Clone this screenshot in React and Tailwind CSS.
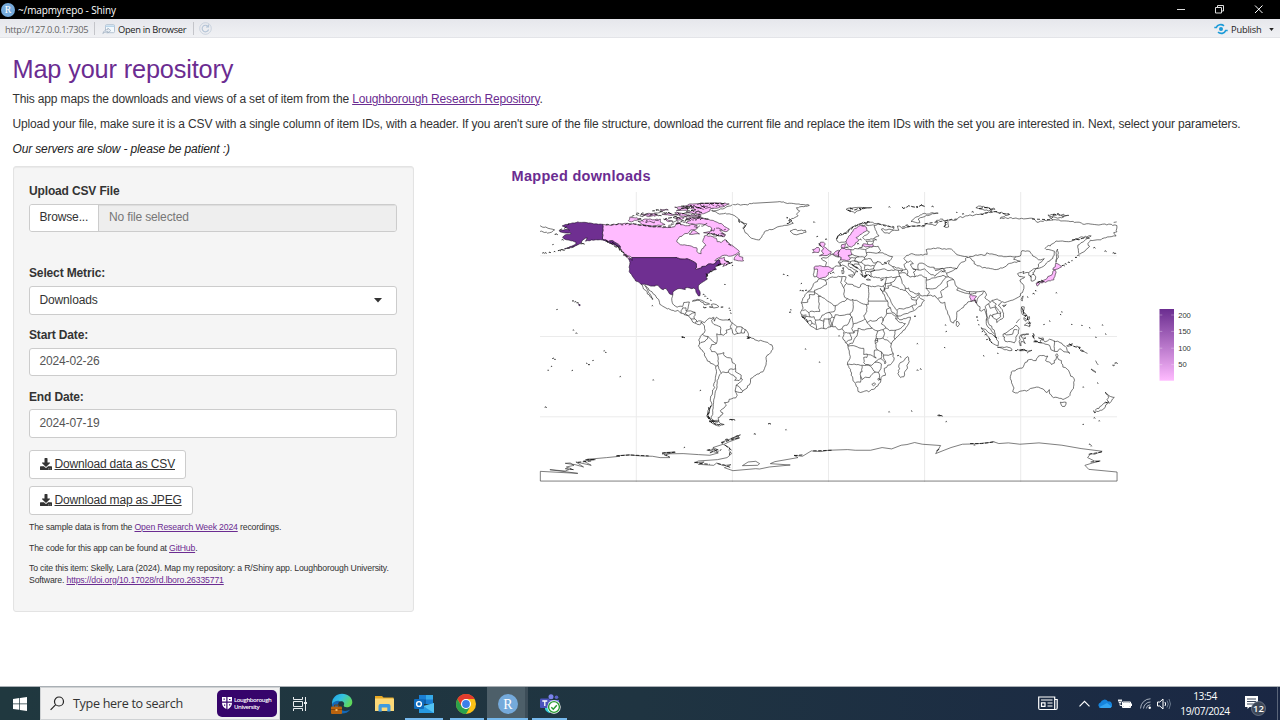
import React from "react";
import { FaDownload } from "react-icons/fa";

/* ---------- map data: "lon,lat lon,lat ..." ---------- */
const USA = [
  "-124.7,48.2 -123,48.3 -122.6,47.2 -122.8,49 -95.2,49 -95.1,49.4 -94.6,48.7 -93.6,48.6 -91.4,48.1 -89.6,48 -88.4,48.3 -84.8,46.8 -83.6,46.1 -82.5,45.3 -82.4,43 -83.1,42 -82.4,41.7 -79,42.8 -79,43.5 -76.8,43.6 -75,45 -71.5,45 -70.3,45.9 -70,46.7 -69.2,47.4 -68,47.3 -67.8,45.7 -67,44.8 -70.1,43.7 -70.8,42.8 -70,41.7 -71.9,41.3 -74,40.7 -74,39.7 -75.5,39 -75.9,37.2 -76.3,39 -76.4,37 -75.7,35.5 -77.4,34.5 -79,33.5 -81.3,31.5 -81.3,30 -80.1,26.9 -80.3,25.3 -81.2,25.2 -82.7,27.6 -82.9,29.1 -84,30.1 -85.3,29.7 -88,30.4 -89.6,30.2 -89.4,29.1 -91.7,29.6 -93.8,29.7 -95.5,28.8 -97.1,27.7 -97.2,25.9 -99.3,26.6 -101.4,29.8 -102.5,29.7 -103.1,29 -104.5,29.6 -106.5,31.8 -108.2,31.8 -108.2,31.3 -111,31.3 -114.8,32.5 -117.1,32.5 -118.4,33.8 -120.4,34.5 -120.7,35.2 -122.5,37.6 -123.9,39.5 -124.4,40.4 -124.1,42 -124.5,43 -123.9,46 -124.7,48.2",
  "-141,69.6 -145,70 -150,70.5 -156.6,71.2 -161,70.2 -163,69.6 -166.2,68.7 -164,67.7 -161.7,66.1 -164,66.6 -168.1,65.7 -166.4,64.7 -161,64.4 -160.8,63.7 -164.5,63.1 -166,61.6 -165,60.6 -162,59.9 -158.5,58.8 -157.6,58.6 -157.7,57.5 -160.5,56 -164.8,54.6 -162,55 -158.4,56 -154.2,58.2 -154,59.4 -151.8,61 -150.6,61.3 -151.7,59.2 -148,60 -144,60 -141,59.9 -139.8,59.6 -137,58.4 -135,57.5 -132,56 -130,55.2 -130,56 -133.4,58.4 -135,59.5 -137.5,59 -139,60 -141,60.3 -141,69.6",
  "-155.9,20.2 -154.9,19.5 -155.7,19 -155.9,20.2",
];
const PINK = [
  "-141,69.7 -136,69 -130,70 -127,70.3 -121,69.8 -115,68.8 -109,68 -102,67.8 -96,68.2 -94,71.5 -92,69.6 -88,68.8 -85.5,69.8 -82,69 -82,67 -86,66.2 -87,64.8 -93,62 -94.6,60 -94.7,58.8 -92.5,57 -88,56.5 -82.3,55.1 -82.2,52.8 -79.5,51.4 -79,54.5 -76.6,56.5 -78.5,59 -77.5,62.5 -73.7,62.4 -70,61 -69.5,58.9 -67,58.3 -64.5,60.3 -61.5,57 -58,54.9 -55.7,53 -56,52 -60,50.2 -66.4,50.2 -71,47 -65,49.2 -64.5,47 -61.5,45.7 -66,43.5 -64.5,45.5 -67,45 -67.8,45.7 -68,47.3 -69.2,47.4 -70.3,45.9 -71.5,45 -75,45 -76.8,43.6 -79,43.5 -79,42.8 -82.4,41.7 -83.1,42 -82.4,43 -82.5,45.3 -83.6,46.1 -84.8,46.8 -88.4,48.3 -89.6,48 -91.4,48.1 -93.6,48.6 -95.2,49 -122.8,49 -124.5,50 -127.5,51 -128.5,53 -130,55 -130,56 -133.4,58.4 -135,59.5 -137.5,59 -139,60 -141,60.3 -141,69.7",
  "-123.5,48.4 -125.5,48.8 -128.2,50.7 -126,50.3 -123.5,48.4",
  "-61.9,66.8 -64,65 -68,66 -64.5,63.4 -65,62 -72,63.5 -78,64.5 -73,65.5 -73,67.5 -77,69.5 -84,69.8 -89,70.5 -86,72 -89,73.7 -81,73.8 -76,73 -71,71.5 -67,70.2 -65,68.3 -61.9,66.8",
  "-117,70 -119,71.5 -114,73 -110,72.5 -105,73 -105,71 -102,69.5 -110,68.6 -115,69.3 -117,70",
  "-125,72 -124,74.3 -117,73.2 -120,72.2 -123,71.2 -125,72",
  "-117,76 -108,76.3 -106,75 -113,74.5 -117,76",
  "-102,73.3 -97,71.5 -101,71.8 -102,73.3",
  "-95,74 -90,73.8 -92,72.5 -95,72.3 -95,74",
  "-62,82.3 -70,83.1 -85,82.3 -91,81 -85,80.5 -86,79.5 -83,78.6 -89,76.8 -79,76.2 -74,78 -74,79.2 -66,80.5 -62,82.3",
  "-80,75.7 -88,75.5 -92,76.6 -96,76.8 -92,74.8 -80,74.6 -80,75.7",
  "-96,80.3 -88,80.2 -88,78.5 -95,78 -92,79 -96,80.3",
  "-105,79 -100,78.6 -104,78 -105,79",
  "-59,47.6 -57.5,50.5 -55.5,51.5 -56,50 -53.5,49.2 -53,47 -55.5,47 -59,47.6",
  "-80.5,63.7 -87,63.6 -84,66 -80.5,63.7",
  "-100,76.5 -104,76 -98,75.2 -94,75.5 -100,76.5",
  "-9,43.1 -8,43.7 -1.8,43.4 3,42.4 3,41.8 -.3,39.5 0,38.7 -2,36.8 -5.6,36 -7.4,37.2 -7,41.9 -9,41.9 -9,43.1",
  "7,53.6 8.5,55 9.9,54.8 11,54 14,54 14.7,51 12.3,50.3 13.8,48.8 13,47.5 10,47.5 7.6,47.6 8,49 6.1,49.6 6,51.8 7,53.6",
  "2.5,51.1 3.5,51.5 4.7,53 7,53.3 6,51.8 6.1,49.6 2.5,51.1",
  "-5.7,50.1 1.3,51.1 1.7,52.7 0,53.5 -3,55.9 -2,57.6 -3.2,58.6 -5,58.6 -6,56.8 -3.2,54.9 -4.5,53.2 -3,51.5 -5.7,50.1",
  "-10,52 -6.2,52.2 -5.6,54.5 -7.5,55.3 -8.3,54.3 -10,54 -9,53 -10,52",
  "8.2,55 8.2,57 10.6,57.7 10.3,56 9.9,54.8 8.2,55",
  "11,59 12.5,56 14.3,55.5 16.5,57 18.9,60 17.2,61.5 21.5,64.5 24,65.8 23.6,67.9 20,69 15.5,66.3 12.3,61.5 11,59",
  "21,56.2 21.6,57.5 24.5,57.2 27.5,57.5 28,56 26,55.7 21,56.2",
  "88.6,26.4 89.8,25.3 92.4,25 91.2,23.5 92.3,20.7 91.8,22.5 89,21.8 88.1,24.5 88.6,26.4",
  "130.9,34 133,34.3 135.5,33.6 137,34.6 140.7,35.2 142,39.5 141.3,41.4 140,40.5 139.5,38.3 136.9,37.2 135.7,35.5 130.9,34",
  "130.2,31.3 131.8,33.2 130.5,33.8 129.6,33 130.2,31.3",
  "132.3,33.4 134.5,34.2 133.7,33.3 132.3,33.4",
  "140,41.6 143.2,42 145.5,43.3 141.8,45.5 141.5,43.2 140,41.6",
];
const COAST = [
  "-59.5,82 -52,82 -46,82.8 -32,83.6 -22,82.6 -12,81.4 -20,80 -18,78 -20,76 -19,75 -22,73.3 -25,72 -22,70.3 -26,69 -32,68 -38,65.8 -40,65 -43,60 -45,60.2 -48,61 -52,64.5 -53.5,67.5 -51,70 -55,71.5 -56,73 -58.5,75 -62,76.2 -68,76 -73,78.2 -66,79.2 -60,82",
  "-24,65.5 -22,66.4 -18,65.9 -14.5,66 -14,64.8 -19,63.4 -22.5,64 -24,65.5",
  "-5.9,35.8 -2,35.1 1,36.5 5,36.8 9.7,37.3 11,37 10.1,34.3 11.2,33.2 15.2,32.3 15.7,31.4 19,30.3 20,31 20.1,32.2 21.5,32.9 23.2,32.2 25,31.6 29,30.9 31,31.5 32.3,31.2 34.2,31.3 34.9,29.5 34.2,27.8 32.4,29.9 33.9,26.7 35.5,24 35.5,23.1 37.2,21 37.4,18.6 38.6,18 39.8,15 41.2,14.5 43.1,12.5 43.3,11.5 44.5,10.4 47,11.1 51.2,12 51,10.4 49.3,6.8 47.7,4.2 45,2 42,-1 40.3,-2.6 39.2,-4.7 38.8,-6.5 39.5,-9 40.5,-10.8 40.8,-14.7 39.4,-16.7 37,-17.8 34.8,-19.8 35.5,-23 35.5,-24.1 32.8,-25.6 32.7,-27 31.3,-29.4 28.2,-32.8 25.8,-33.9 22.6,-33.9 20,-34.8 18.4,-34.1 18.2,-31.7 16.5,-28.6 15.2,-27 14.4,-22.7 12.6,-18.6 11.8,-17.3 13.6,-12.5 13,-9 12.2,-6 11.8,-4.6 9.4,-2.1 8.8,-.8 9.6,1.1 9.8,3 9,4.1 8.5,4.8 6.1,4.3 4.3,6.3 1,5.9 -2,4.8 -4.6,5.2 -7.7,4.4 -11.4,6.8 -13.2,8.9 -15,11 -16.7,12.4 -17.5,14.7 -16.3,17 -16.3,19.1 -17,21 -16,23.7 -14.6,26 -13,27.7 -11,29 -9.8,31.2 -9.4,32.6 -6.9,34.1 -5.9,35.8",
  "49.5,-12.5 50.4,-15.5 49.6,-17 47,-25 45,-25.5 43.3,-23 44.4,-20 44,-17.5 46,-15.8 48,-13.5 49.5,-12.5",
  "-77.4,8.6 -75.5,10.6 -72,12 -71.5,11 -71.2,9.5 -70,12 -68,10.6 -64,10.3 -61.8,10.7 -60,8.5 -57,6 -54,5.8 -51.7,4.2 -50,1.7 -50,0 -48,-1 -44.5,-2.5 -41,-2.9 -39,-3.5 -35.3,-5.2 -34.8,-8 -37,-11 -39,-13 -39,-17.7 -41,-22 -44.6,-23.3 -48.5,-26 -48.7,-28.5 -52,-32.8 -54,-34.7 -58.2,-34 -57,-36.5 -58,-38.2 -62,-39 -62.3,-40.7 -65,-41 -63.8,-42.5 -65.3,-44.5 -67.5,-46 -65.8,-47.5 -69,-50.5 -68.4,-52.3 -71,-53 -74,-51 -75.5,-48.5 -74.5,-45 -72.8,-42.3 -73.7,-39.9 -73.5,-37 -71.5,-32.5 -71.5,-29 -70.3,-24 -70.3,-18.4 -75.5,-15.3 -78.8,-8.5 -81.2,-6 -80.4,-3.4 -81,-2.2 -80,0 -78.8,1.4 -77,3.8 -77.4,6.5 -77.9,7.2 -79.5,9 -80.5,7.3 -83.5,8.4 -85.8,11 -87.5,13 -92,14.5 -94,16.2 -96,15.7 -102,18 -105.3,20 -106,23 -109.5,26.5 -112.5,30 -114.8,31.8 -113,29 -111.5,26.5 -109.5,23.2 -110,23 -112,26 -114,28.5 -115.5,29.5 -117.1,32.5",
  "-77.4,8.6 -79.6,9.6 -82,9 -83.7,11 -83.3,15 -86,15.9 -88.8,15.9 -87.5,18.5 -86.8,21.4 -90.3,21.1 -91,18.7 -94.5,18.2 -96.5,19.5 -97.8,22.5 -97.2,25.9",
  "-68.4,-52.7 -68.2,-53.2 -65.1,-54.7 -68,-55.6 -71,-54.8 -74.6,-52.8 -70.5,-53 -68.4,-52.7",
  "-85,21.9 -82,23.1 -79,22.4 -75,20.6 -74.2,20.2 -77.7,19.9 -78,21 -82,22.5 -85,21.9",
  "-73.2,19.9 -70,19.8 -68.4,18.6 -71.5,17.7 -74.4,18.4 -72.3,18.6 -73.2,19.9",
  "-78.3,18.4 -76.3,18 -77.5,17.8 -78.3,18.4",
  "-67.2,18.4 -65.7,18.3 -67.2,18",
  "-7.4,37.2 -9,37 -9.5,38.7 -8.9,41.9",
  "-1.8,43.4 -1.2,46 -4.6,48.4 -1.5,48.7 1.6,50.9 2.5,51.1 6,49.4 8,49 7.6,47.5 6,46.2 7.5,43.7 4,43.5 3,42.4",
  "11,59 9,58.6 7,58 5,60.5 6,62.8 11,64.5 14.5,68 20,70 26,71 31,70.3 29,69 25.5,69 20.6,69",
  "24,65.8 25.5,65 21.3,61.5 23,59.9 28,60.5 31.5,62.5 30,65 28.5,68.5 29,69",
  "31,70 33,69.4 41,67.5 40,66.2 33,66.7 35,64.3 38,64 41,66 44,66 43,68.6 46,67 50,68 54,68.5 60,68.5 60.5,69.8 67,69 68.5,71 67,71.5 70,73 73,71.5 72.5,68 75,68 74,72.5 80,72.5 81,73.8 87,75 95,76 104,77.6 113,75.8 107,73.3 113,73.7 119,73 127,73.5 130,71 134,71.5 140,72.5 150,71.6 155,71 160,69.7 165,69.7 170,69.5 175,69.8 180,68.9 180,65 178,64.5 179.5,62.4 174,61.8 170,60 163.5,59.8 162,57.9 163,56.1 160,53 156.8,51 155.7,56.8 161,60.5 164,62.5 156.7,61.5 151,59 146,59.3 142,59.3 135.2,54.8 141,53 140,48.5 133,43 130,42.3 127.5,39.7 129.4,37 129,35.2 126.5,34.5 126.5,37.5 125,38 125,39.6 121.5,39 122,40.5 118,39 119,37.3 122.5,37 119.5,35 122,31.5 121.5,28.5 118.6,24.5 114,22.4 110,21 108.5,21.6 106,19.5 108.8,15.3 109.3,12 107,10.5 105,8.7 105,10.5 102.5,12 100.9,13.4 99.5,10.5 100.5,7 103.5,4 104.2,1.3 103.4,1.6 100.5,5 98.5,8 98.6,13 97.3,17 95.5,15.8 94.3,16.2 94.5,18.5 92,21.5 91.8,22.5 89,21.8 87,21.5 86,20 82.3,16.7 80.2,15.5 80,12 79.8,10.3 78,8.3 76.6,9 74.5,14 72.8,19.5 72.6,21.3 70,21 69,22.4 67.5,23.9 66.5,25.4 61.6,25.2 57.3,25.6 56.5,27.1 54,26.6 51,28 50,30.2 48,30 47.8,29.5 50,26.7 51.5,25 54,24.1 56.3,26 56.8,24.3 59.8,22.4 57.8,19 55.2,17.4 52.2,15.6 45,12.8 43.3,12.7 42.7,16.4 39.1,21.3 38,24 35,28 35,29.5",
  "34.2,31.3 35.5,33.5 36,36.8 32.5,36.1 30.5,36.5 28,36.8 26.5,38 26.2,40 29,41.1 31.5,41.3 35,42 38.3,41 41.5,41.5 39,44.1 37.5,45 38,47 34.8,46 36.4,45.3 33.4,44.6 32.5,46 30.8,46.6 28.5,43.5 28,42 29,41.1 26.4,40.5 23.5,40.5 23,39.5 24,37.9 22.7,36.5 21.3,37.6 19.4,41.5 16,43.5 13.8,45.1 12.4,45.5 12.4,44 18.4,40.2 16.9,40.3 16,38 15.7,40 12.5,41.7 10.3,43.8 8.8,44.4 7.5,43.7",
  "12.5,38 15.5,38.2 15,36.7 12.5,38", "8.2,41 9.7,40.8 9.5,39.2 8.5,39 8.2,41", "8.7,42.6 9.5,42.8 9.3,41.5 8.7,42.6", "23.6,35.4 26.3,35.1 24,35.1 23.6,35.4", "32.5,35 34.3,35.5 33,34.7 32.5,35",
  "51,47 53,45.3 51.3,45 52.7,42 54.7,41.5 53,40 53.9,37 50.8,36.9 49,38 49.3,41 47.6,42.8 47,44.6 49,46.3 51,47",
  "14,54 18.6,54.5 21,55.3 21,56.2", "24.5,57.2 23.5,59.2 28,59.5 30,60 28,60.5",
  "142,46 143.5,49.2 143.2,51 143,54.3 142,52 142,46",
  "120.2,23 121.5,25.2 120.9,22 120.2,23", "108.7,19.3 110.9,19.8 109.5,18.3 108.7,19.3",
  "120.3,16 120.6,18.5 122.2,18.4 121.6,15.5 124,13 121,13.7 120.3,16", "122.2,7 124,8.5 126.3,8.5 125.5,6 124,6.8 122.2,7", "122,10.5 123.3,9.5 123.5,10.8 122,11.8 122,10.5", "124.3,11.5 125.3,12.5 125,10.3 124.3,11.5", "117.3,8.4 119.5,11",
  "109,1.5 111.4,2.7 115,5 117,7 119,5.2 117.8,1 116,-4 110.2,-2.9 109,1.5",
  "95.3,5.5 98,4.5 103.8,0 106,-3 105.8,-5.9 102,-4 98.6,1.8 95.3,5.5",
  "105.5,-6.7 108.5,-6.6 112.7,-6.9 114.5,-7.8 114.4,-8.7 108.7,-7.6 105.5,-6.7",
  "119,-3.3 119.8,.8 125,1.5 120.2,.4 121,-1 123.3,-.9 121.6,-2 122.8,-4.5 120.4,-3 120.3,-5.6 119.5,-5.5 119,-3.3",
  "131,-.8 134,-.9 135,-3.3 138,-1.7 144.5,-3.8 147.6,-6 150.7,-10.5 147,-9.5 144.5,-7.6 143,-9.3 138.8,-8.2 138,-5.5 133,-4 132,-2.8 134,-2.2 131,-.8",
  "142.5,-10.7 143.6,-14.3 145.4,-15 146.3,-19 149,-20.3 150.9,-23.5 153.2,-26 153,-31 150,-37.3 146.4,-39.1 144,-38.4 140.5,-38 138,-35.6 137.8,-33 135.9,-34.8 134,-32.6 131,-31.5 126,-32.3 123.6,-33.9 120,-33.9 118,-35 115,-34.2 115.8,-32 113.5,-26.2 114.1,-22 117,-20.7 121,-19.6 122.2,-17.3 125.5,-14.3 128,-15 129.6,-15 131,-12.2 136.9,-12.2 135.5,-15 139.2,-17.4 141,-16.5 142.5,-10.7",
  "144.7,-40.8 148.3,-40.9 147.5,-43.4 146,-43.5 144.7,-40.8",
  "172.8,-34.5 175,-36.8 178.4,-37.8 176.9,-39.5 175.2,-41.6 173.8,-39.3 174.8,-38 172.8,-34.5",
  "172.7,-40.6 174.2,-41.7 172.8,-43.8 170.6,-45.8 168.4,-46.6 166.6,-45.8 170.5,-43 172.7,-40.6",
  "79.8,8 80,9.6 81.8,7.5 80.6,6 79.8,8",
  "11,79 16,80 20,80.2 27,80.1 21,79.4 18,78 16.5,76.6 14,77.8 11,79",
  "51.5,71.5 57,70.7 56,73 61,75.3 68.5,76.6 65,76.9 58,75.6 53,73 51.5,71.5",
  "95,81 98,80 104,79 100,78 96,79 92,80 95,81", "137,75.5 143,75.8 150,75.2 143,73.5 139,74.5 137,75.5",
  "149,-5.7 152,-4.3", "148.5,-5.8 151.8,-5.5 152.2,-4.2", "155,-5.8 157,-7.5", "158,-8 161.7,-10.5", "164,-20.2 167,-22.3 165.5,-21.6 164,-20.2",
  "177.3,-17.8 178.6,-17.8 178,-18.2 177.3,-17.8", "166.7,-15 167.5,-16.5 168.4,-17.7", "119,-8.5 122.8,-8.4 119.3,-8.9", "124,-9.8 127,-8.5 124,-10.3", "128,-3 130.7,-3.3 128,-3.4", "127.7,2 128.5,.8 127.8,-.5 127.7,2", "179.9,71.2 178,70.9",
  "-180,68.8 -175,67.2 -171,66.2 -174,64.5 -180,65.2",
];
const BORDER = [
  "-8.7,27.7 -13,27.7", "-17,20.8 -13,21.3 -13,23 -12,23.5 -12,26 -8.7,26 -8.7,27.4", "-8.7,27.4 -8.7,28.8 -5.5,29.9 -3.6,31 -1.3,32.2 -1.8,34.5 -2.2,35.1",
  "-8.7,27.4 -4.9,25 1.8,20.6 3.2,19.1 4.3,19.1 5.7,19.6 12,23.5", "12,23.5 10,24.4 9.5,26.3 9.9,28.1 9.5,30.3 8.4,32.5 7.6,33.4 8.1,35 8.4,36.9", "9.5,30.3 10.3,32 11.5,33.1",
  "12,23.5 14.1,22.5 15,23 23.8,19.6 23.8,20 25,20 25,22 25,31.6", "25,22 36.9,22", "15,23 15.5,20.7 15.3,17 13.5,14.4 14,12.5", "-4.9,25 -6.5,25 -5.5,15.5 -11.5,15.5 -12.2,14.7",
  "4.3,19.1 4.2,16.8 3.6,15.5 .4,15 -2,14.2 -4,13.2 -5.4,10.4 -8,10.2 -9,12.3 -11.4,12.2 -12.2,14.7 -14.5,16.6 -16.3,16.1", ".4,15 2.2,12.6 2.2,11.9 .9,11 -2.8,11 -2.8,9.6 -5.4,10.4",
  "2.4,12 3.6,11.7 4.1,13.5 7,13 10,13.3 13.6,13.7", "3.6,11.7 2.7,9 2.7,6.3", ".9,11 1.4,9.3 1.6,6.2", "0,11 .5,8 1.1,6", "-2.8,9.6 -3.2,6.3 -2.9,5", "-8,10.2 -8,8 -7.5,6 -7.6,4.4", "-13.2,9 -11,10 -10.3,8.4 -11.4,6.9", "-10.3,8.4 -8.4,7.6", "-11.4,12.2 -13.7,12.6 -16.7,12.4", "-15,11 -13.7,12.6", "-16.7,13.5 -13.8,13.4",
  "8.5,4.8 9.2,6.4 11.7,7 13.2,9.6 14.5,12.5 15,10 15.4,7.7 14.5,5 16,2.3", "9.8,2.2 13,2.2 16,2.2", "13.2,2.2 14.5,-1 14.3,-2 12.5,-2.4 11,-3.9", "16,2.2 16,3.5 18.5,3.5 17.8,.3 16,-2 15,-4.3 13,-4.6 12.2,-5.8", "15.4,7.7 18.8,8.9 22.8,11", "18.5,3.5 18.5,5 22.4,4.1 27.3,5.2 24,8.7 22.8,11", "23.8,19.6 23.9,15.6 22,13 22.8,11",
  "24,8.7 26,10 29,9.6 32,11.7 33.2,12.2 34,9.6 33,7.8 35.8,5.3 34,4.2 30.8,3.5 27.3,5.2", "34,9.6 36.3,14.3 36.4,17 38.6,18", "36.3,14.3 39.3,14.5 42.4,12.5 41.8,11 43,11 42.6,10.6 44,9 47,8 48,8 45,5 41.9,3.9 38.1,3.6 35.8,5.3", "41.9,3.9 41,-.9 41.6,-1.7", "34,4.2 35,1.9 33.9,-1 37.7,-3 39.2,-4.7", "30.8,3.5 29.8,.6 29.6,-1.3 33.9,-1", "29.6,-1.3 29,-2.7 29.3,-4.4 30.8,-3.3 30.5,-1.1", "29,-2.7 30.8,-2.4",
  "29.3,-4.4 29.6,-6.5 30.7,-8.3 28.7,-8.5 28.4,-12 29.8,-13.4 27.4,-12 25,-11.3 22,-11.2 22,-7.3 19,-7 16.5,-5.9 12.3,-6", "30.7,-8.3 33,-9.5 33.3,-12.4 32.7,-13.7 30.2,-15 28.9,-16 27,-17.9 25.2,-17.7 23.2,-17.5 22,-16.2 22,-13 24,-13 24,-11", "11.8,-17.3 14,-17.4 18.5,-17.4 21.4,-17.9 25.2,-17.7", "21,-18 21,-22 20,-22 20,-28.4 17,-28.5", "20,-24.8 21,-26.8 23,-25.3 25.7,-25.5 27,-23.6 29.4,-22.1 27.7,-20.5 25.2,-17.8", "29.4,-22.1 31.2,-22.3 32.7,-20 33,-17 30.3,-15.9 28.9,-16", "31.2,-22.3 31.9,-24 32,-26.8 32.8,-26.8", "27,-29.7 28.6,-28.7 29.4,-29.6 28,-30.6 27,-29.7", "31,-26 32,-26.7 31.2,-27.2 30.8,-26.5 31,-26", "33,-9.5 34.4,-11.5 34.6,-14 35.8,-16 35.2,-17 34.3,-15 32.7,-13.7", "34.4,-11.5 37.5,-11.7 40.4,-10.5",
  "-70.3,-18.4 -69,-18 -68.5,-20 -67,-22.8 -68.5,-25 -69.5,-29 -70,-33 -71,-36.5 -71.7,-40 -72,-44.5 -72.3,-48.5 -73.3,-50.5 -72,-52 -68.4,-52.3", "-69,-18 -69,-12.5 -69.5,-11 -65.3,-10 -65,-12 -60.5,-13.8 -60,-16.3 -58,-17.5 -58,-20 -62,-20.5 -62.6,-22.2 -66,-22 -67,-22.8", "-58,-20 -58,-22 -54.5,-24 -54.6,-25.6 -55.8,-27.4 -58.6,-27.2 -57.6,-25.5 -62.6,-22.2", "-54.6,-25.6 -53.7,-27 -57.6,-30.2 -58.3,-34", "-57.6,-30.2 -56,-31 -53.5,-33.7", "-69.5,-11 -70.6,-9.5 -73,-9.4 -73.9,-7.5 -73,-5 -70,-4.3 -69.5,-1 -69.8,1.7 -67,1.2", "-70,-4.3 -75.3,0 -77.5,.5 -78.8,1.4", "-75.3,0 -75.5,-1.5 -78.3,-3.4 -80.3,-4.4", "-67,1.2 -67.5,6 -70,7 -72.5,8.5 -73,10 -71.4,11.8", "-67,1.2 -65.5,.8 -63.4,2.2 -64,4 -60.7,5 -61.3,6 -60,8.5", "-60.7,5 -59.8,2 -58.8,1.2 -56.5,1.9 -54.5,2.3 -52.5,2.2 -51.7,4.2", "-57,6 -58,4 -56.5,1.9", "-54,5.8 -54.5,2.3",
  "-92,14.5 -92,16 -91,17.8 -89,17.8 -89,15.9", "-90,13.8 -89.3,14.4 -88.3,15.7", "-89.3,14.4 -87.5,13", "-87.3,13 -85,14.5 -83.2,15", "-85.7,11 -83.7,11", "-83,8.3 -82.6,9.5",
  "49,46.3 47,48.4 48.7,50.3 52,51.5 55.7,50.6 61.6,51 61,54 68,55 71,54.2 76.7,54.3 77.8,53.3 80,50.9 87.3,49.1 85.5,48.5 85.7,47.2 82.3,45.5 80.2,42.2 75,42.8 71,42.3 66,42 66,43 62,43.5 58.5,45.6 56,45 56,41.3 52.7,42",
  "87.3,49.1 92,50.7 98,50.5 98.8,52 102,51.3 107,50 112,49.7 117,49.5 119.7,50 120.7,53.3 125.5,53 127.5,50 131,47.7 134.7,48.3 131,44.9 130.6,42.4", "87.8,49.1 91,46.5 90.9,45.2 96,42.7 100,42.5 105,41.6 111,43.7 111.9,45 116,46.3 119.7,46.7 115.6,47.9 117,49.5",
  "80.2,42.2 73.7,39.4 75,37 78,35.4 79,32.5 81,30.2 84,28.9 88,27.9 92,27.7 97.3,28.2 98.7,25.8 97.6,24 101.2,21.5 102.2,22.4 105.3,23.3 108,21.6", "81,30.2 80,28.8 84,27.4 88,26.4 88,27.9", "92.3,20.7 93.3,24 97.3,28.2", "88.7,26.4 92,26.8 92,27.7", "97.8,18.5 100,20.3 101.2,21.5", "100,20.3 101,17.5 104,18.3 105.5,14.4 102.5,13.6 102.5,12", "97.8,18.5 98.6,15 99,12 98.7,10", "102.2,22.4 104.8,20 103.9,19.3 107.5,15 107.5,12.3 105,10.5", "105.5,14.4 107.5,14.5",
  "61.6,25.2 63,27.2 61,29.8 66.4,29.8 69.3,31.9 71,34 73.5,37 75,37", "68.2,23.7 71,24.4 70,27.8 74.5,31 74,34 78,35.4", "61,29.8 61,35 61.2,36.6 57,38.2 53.9,37", "61,35 64.5,36.3 68,37 71.5,38 73.5,37", "56,41.3 60,42 62,40 66.5,37.4 68,39 70.5,41 73.7,39.5", "66.5,41 71,42.3 73,41 70.5,40", "48,30 46,33 45.4,35.8 44.8,37.2 44,39.4 48,39.5 48.9,38.4", "36,36.8 38,36.8 42.4,37.1 44.8,37.2", "44,39.4 43.5,41.1 41.5,41.5", "40,43.4 44,42.6 47,41.3 48.5,41.8", "43.5,41.1 46.5,41.1 45,40", "42.4,37.1 41,34.4 38.8,33.4 35.7,32.7", "38.8,33.4 39.2,32 44.7,29.2 48,28.5", "39.2,32 37,31.5 37.5,30 35,29.3", "35.5,33.5 35.5,31 34.9,29.5", "42.8,16.4 44,17.4 47,17 52,19 53,16.6", "52,19 55,20 55,22.7 52,23 51.5,24.3", "55,22.7 56,24.5",
  "18.6,54.5 23.3,54 23.6,52 24,50.7 22.5,49.2 19,49.5 15,51 12.3,50.3", "13.8,48.8 17,48.8 19,49.5", "23.3,54 26,55.7 28,56", "27.5,57.5 28,59.5", "23.6,52 31,52 32.5,53.3 31,56 28,56", "31,52 34,52 37,50.4 40,49.6 38.2,47", "22.5,49.2 22.7,48 26.6,48.2 28.2,45.5 30.8,46.6", "22.7,48 20.3,46.1 22.6,44.3 28.5,43.8", "22.6,44.3 22.4,42.3 23,41.3 26.4,41.8 28,42", "17,48.8 16.2,46.9 20.3,46.1", "7.6,44 7,46 10.5,46.8 13.7,46.5 13.8,45.5", "13.7,46.5 16.2,46.9 18.8,45.9 19,44.8 16,45 15.8,44.2 18.5,42.5", "19,44.8 20.5,43 20.6,41 21,39.7", "20.6,41 23,41.3", "126.5,37.8 128.3,38.6", "125,39.8 128,42 130.6,42.4", "109.7,1.9 111,1 115,1.5 115.7,4.2 117.9,4.1", "141,-2.6 141,-9.1",
];
/* heavy, broken shorelines: fjords and island chains */
const HEAVY = [
  "-139,59 -136,58 -134.5,57 -132,55.5 -130.5,54 -128.5,52.5 -127,51 -125,50", "-135,58.5 -133,57 -131,55.3 -129,53.5", "-75,-44 -74.5,-47 -75.5,-49 -74.5,-51.5 -72,-53.5 -69,-55 -66.5,-55.2", "-73.5,-43 -74.3,-46 -74.6,-50 -73,-52.5 -70.5,-54",
  "5,60.5 6,62.5 10,64 13,66.5 16,68.5 20,70 26,71", "-76.3,39 -76,37 -75.8,36", "-74,40.5 -71,41.5", "-67,45 -70,43.8", "22,38 24,38 26,37.5 27.5,36.7", "20,39 23,37 24.5,38.8", "14.5,45 16.5,43.3 18,42.5", "130,33 131.5,34 134,34.4", "-16.5,12 -14.5,10.5 -13,8.7",
  "-79,77 -86,78 -90,76.5 -94,77", "-77,80 -85,81 -92,79.5", "-65,82.5 -80,82.8", "-98,76 -103,77.5 -110,78", "-103,73 -97,74 -92,73", "-95,70 -90,72 -86,73.5", "-75,73 -85,74", "-53,67 -52,69.5 -54,71 -56,73", "-26,70 -23,72 -26,73.5", "-66,62 -70,63 -76,64", "-62,46 -65,47.5",
  "12,78.5 18,79.3 24,80", "46,80.5 52,80.7 60,80.8", "94,79.5 99,80 103,78.5", "120.5,18 122,14 124.5,12 125.5,9 125.8,6.5", "100,-1 102,-4", "116.5,-8.6 120,-8.6 124,-8.3", "127,.5 129,-3 133,-4", "150,-5 155,-6.5 160,-9", "37,-.5 36.9,-.6", "-51,0 -49.5,-.8 -51,-1.2 -48.8,-.3", "104,1 106,-1", "138,73.8 142,75.7 147,75", "72,68 74,71", "152,60 160,61.5 163,60", "165.5,-46 167.5,-46.6", "173,-41.2 175,-41",
  "-6,58 -5,56.5 -4,55.8", "-60,46 -64,44.5",
];
/* crowded channels between the Canadian Arctic islands */
const CHANNELS = [
  "-119,72 -112,71 -106,72", "-118,75 -110,75.5 -105,77", "-98,70 -94,72 -97,74", "-91,71 -87,73 -80,73", "-90,75 -84,76 -79,75", "-90,80 -84,79.5 -78,79 -72,79.8", "-82,82 -72,81.5 -65,81", "-84,68 -80,69 -75,70", "-74,66 -68,67 -64,66.5", "-72,62.5 -67,64 -64,63", "-100,69 -96,70 -92,69",
];
const DOTS = [
  [-159.5, 22, 2], [-157.9, 21.4, 2], [-156.5, 20.8, 2], [-90.5, -0.7, 3], [-91.2, -0.3, 2], [-61, 14.5, 1], [-61.4, 16.2, 1], [-62, 17.5, 1], [-78, 26, 1.5], [-77, 25, 1.5], [-75.5, 23.5, 1.5], [-73.5, 22.5, 1], [-59.5, -51.8, 4], [-61, -51.7, 3], [-36.8, -54.3, 3], [-24, 15, 2], [-23.5, 16.5, 1], [-16, 28.3, 2], [-14, 28.6, 2], [-17.5, 28.5, 1.5], [-28, 38.5, 1.5], [-25.5, 37.7, 1.5], [-17, 32.8, 1],
  [-7, 62, 1.5], [-1.5, 60.3, 2], [-9, 71, 1.5], [55.5, -21, 1.5], [57.5, -20.3, 1.5], [55.4, -4.6, 1], [73.5, 3, 1], [73, 7, 1], [72.5, -7, 1], [70, -49.3, 4], [69, -49, 3], [73.5, -53, 1], [37.8, -46.9, 1], [51.8, -46.4, 1], [43.5, -12, 2], [45, -12.8, 1], [6.6, .3, 1], [-14.4, -7.9, 1], [-5.7, -16, 1], [54, 12.5, 2], [92.7, 12, 2], [93, 10, 1], [93.8, 7.2, 1], [96, 3, 1], [98, 1, 1.5], [99, -2, 1.5],
  [144.8, 13.5, 1], [145.7, 15.2, 1], [134.5, 7.4, 1], [138, 9.5, 1], [151.8, 7.4, 1], [158.2, 6.9, 1], [163, 5.3, 1], [171, 7, 1], [173, 1.4, 1], [166.9, -.5, 1], [142.2, 27, 1], [128, 26.5, 2], [129.4, 28.3, 1.5], [124.2, 24.4, 1], [126, 37, 1], [146.5, 44, 3], [148, 45, 2], [150, 46, 2], [152, 47, 1], [154.5, 49, 2], [156, 50.3, 2], [166, 55, 2], [172.9, 52.9, 2], [178, 51.8, 2], [179, 51.5, 1.5],
  [-178, 51.8, 2], [-176.6, 51.8, 2], [-174, 52.2, 2], [-171, 52.6, 1.5], [-168, 53.3, 3], [-166.5, 53.8, 3], [-153.5, 57.5, 4], [-170, 63.4, 3], [-166, 60, 2], [-172, 57, 1], [-171.8, -13.7, 2], [-170.7, -14.3, 1], [-175, -21, 1], [-173, -18.7, 1], [-160, -21.2, 1], [-149.5, -17.6, 2], [-151, -16.7, 1], [-147, -15, 1], [-140, -9, 1], [-139, -10, 1], [-157.4, 2, 1.5], [-159.3, 3.9, 1], [-169.5, 16.7, 1], [-109.4, -27.1, 1], [-130, -25, 1], [-176.5, -44, 2], [166, -50.7, 1.5], [169, -52.5, 1], [158.9, -54.6, 1], [179.5, -16.6, 3], [-80, -33.6, 1], [105.6, -10.5, 1], [96.8, -12.1, 1], [159, -31.5, 1], [168, -29, 1], [-62, 10.5, 2], [-64.7, 32.3, 1], [-110, 19, 1], [-63.5, -64, 3], [-46, -60.6, 2], [-57, -62, 3], [-26.5, -58, 1], [91, -67.5, 1], [163, -67, 1.5], [164, -68, 1], [-90, -69, 1], [-63, 46.3, 2], [-60, 44, 1], [18.5, 57.5, 2], [20, 60.2, 2], [11.5, 55.3, 3], [3, 39.6, 2], [1.4, 39, 1], [49, 69, 3], [38, 80.4, 1.5], [80, 77, 1], [84, 76, 2], [65, 80.7, 2], [90, 77.3, 2],
];

let seed = 7;
const rnd = () => {
  seed = (seed * 16807) % 2147483647;
  return seed / 2147483647 - 0.5;
};
const px = (lon, lat) => [828.5 + lon * 1.602, 336.5 - lat * 1.61];
function toPath(str, amp) {
  const pts = str.split(" ").map((p) => px(...p.split(",").map(Number)));
  let d = `M${pts[0][0].toFixed(1)} ${pts[0][1].toFixed(1)}`;
  for (let i = 1; i < pts.length; i++) {
    const [a, b] = pts[i - 1];
    const [c, e] = pts[i];
    const len = Math.hypot(c - a, e - b);
    const n = len > 18 ? 1 : Math.max(1, Math.round(len / 2));
    for (let k = 1; k < n; k++) {
      const t = k / n;
      d += `L${(a + (c - a) * t + rnd() * amp).toFixed(1)} ${(b + (e - b) * t + rnd() * amp).toFixed(1)}`;
    }
    d += `L${c.toFixed(1)} ${e.toFixed(1)}`;
  }
  return d;
}
const all = (list, amp) => list.map((s) => toPath(s, amp)).join("");
const USA_D = all(USA, 0.8);
const PINK_D = all(PINK, 1.3);
const COAST_D = all(COAST, 1.5);
const BORDER_D = all(BORDER, 1.1);
const HEAVY_D = all(HEAVY, 3.4);
const CHANNELS_D = all(CHANNELS, 3.6);
const ARCTIC_COAST_D = all(
  ["-139,69.5 -130,70 -121,69.8 -109,68.2 -97,68", "31,70 41,68", "46,68 60,69", "60,70 80,73", "95,76 104,77.6 113,75.9", "127,73 140,72.5", "-168,66 -162,70", "-120,76.5 -110,76 -104,75", "-166,53.8 -162,54.8 -157,57", "-123,74.5 -117,75.8", "-92,81 -80,80", "-64,60 -60,55.5", "-75,-50 -70,-53.8"],
  2.2
);
const DOTS_D = DOTS.map(([lo, la, s]) => {
  const [x, y] = px(lo, la);
  return `M${(x - s / 2).toFixed(1)} ${y.toFixed(1)}l${(s * 0.6).toFixed(1)} -.4l${(s * 0.4).toFixed(1)} .7`;
}).join("");
const ANTARCTICA =
  "M27 242V213L125 219 52 208 92 212 108 205 95 200 115 195 105 188 92 189 118 193 140 200 120 185 160 195 140 182 170 178 150 177 200 172 235 168 228 166 260 164 290 167 320 168 340 172 365 172 355 163 378 155 352 157 345 161 400 160 440 163 470 165 492 158 465 150 492 149 478 142 505 132 500 126 520 118 550 104 525 115 548 113 520 125 506 133 522 143 520 150 527 160 515 172 490 178 440 182 430 187 455 185 440 192 480 195 488 188 505 196 525 193 508 202 530 211 590 205 600 206 625 200 680 194 628 190 640 184 700 172 690 165 712 168 735 152 760 154 780 150 830 148 850 150 890 150 920 142 945 146 970 135 985 133 1005 127 1025 132 1073 136 1060 160 1082 150 1100 142 1130 132 1165 131 1200 127 1210 124 1225 130 1250 128 1280 132 1330 128 1390 135 1440 145 1495 153 1475 162 1465 160 1457 172 1475 182 1490 182 1470 188 1450 195 1460 207 1534 215V242Z M555 196 570 185 590 183 600 190 595 195Z";
const ANT_HEAVY =
  "M92 205 115 208M125 186 160 182M145 178 172 178M225 167 260 164 310 167M345 158 380 156M350 163 365 170M462 150 480 146 490 155 500 148M470 158 490 148M500 128 522 120 548 112M510 135 527 150M523 155 520 168M430 186 450 190 470 192M490 190 508 194 525 202M690 166 712 164M740 152 790 150M1062 152 1072 145M1150 130 1180 130 1215 125M1460 162 1495 155M1465 185 1490 183";

function WorldMap() {
  return (
    <svg className="block h-[296px] w-[720px]" viewBox="500 190 720 296" fill="none">
      <defs>
        <linearGradient id="scale" x1="0" y1="0" x2="0" y2="1">
          <stop offset="0" stopColor="#6b2d90" />
          <stop offset="1" stopColor="#ffbbff" />
        </linearGradient>
      </defs>
      <path d="M636.3 192V482M732.4 192V482M828.5 192V482M924.6 192V482M1020.7 192V482M540 255.8H1117M540 336.5H1117M540 416.8H1117" stroke="#ebebeb" strokeWidth="1" />
      <g strokeLinejoin="round" strokeWidth="0.6">
        <path d={COAST_D} stroke="#1c1c1c" />
        <path d={BORDER_D} stroke="#1c1c1c" />
        <path d={PINK_D} fill="#ffbbff" stroke="#2a1c2a" />
        <path d={USA_D} fill="#6f2f91" stroke="#21102b" />
        <path d={ARCTIC_COAST_D} stroke="#111" strokeWidth="0.8" strokeDasharray="3 2" />
        <path d={CHANNELS_D} stroke="#1a141a" strokeWidth="0.6" strokeDasharray="7 1.5" />
        <path d={HEAVY_D} stroke="#0c0c0c" strokeWidth="0.9" strokeDasharray="4 1.2" />
        <path d={DOTS_D} stroke="#111" strokeWidth="0.9" />
      </g>
      <g transform="translate(530 400) scale(.3827 .335)">
        <path d={ANTARCTICA} stroke="#2d2d2d" strokeWidth="1.700" strokeLinejoin="round" />
        <path d={ANT_HEAVY} stroke="#111" strokeWidth="2.400" strokeDasharray="9 4" />
      </g>
      <rect x="1159.500" y="309" width="14.500" height="71.700" fill="url(#scale)" />
      <path d="M1159.500 315H1162.300M1171.200 315H1174M1159.500 331.400H1162.300M1171.200 331.400H1174M1159.500 348.200H1162.300M1171.200 348.200H1174M1159.500 364.700H1162.300M1171.200 364.700H1174" stroke="#fff" strokeOpacity=".45" strokeWidth=".7" />
      <g fill="#333" fontFamily="'Liberation Sans', Arial, sans-serif" fontSize="7.600">
        <text x="1178.300" y="317.600">200</text>
        <text x="1178.300" y="334">150</text>
        <text x="1178.300" y="350.800">100</text>
        <text x="1178.300" y="367.300">50</text>
      </g>
    </svg>
  );
}

function RLogo({ size }) {
  return (
    <svg width={size} height={size} viewBox="0 0 20 20" className="shrink-0">
      <circle cx="10" cy="10" r="10" fill="#75aadb" />
      <text x="10" y="14.700" textAnchor="middle" fontSize="14" fill="#fff" fontFamily="'Liberation Serif', serif">R</text>
    </svg>
  );
}

function TitleBar() {
  return (
    <header className="flex h-[19px] items-center bg-black pl-[1px] text-white">
      <RLogo size={14} />
      <span className="ml-[3px] text-[10px] leading-none tracking-[-0.12px]">~/mapmyrepo - Shiny</span>
      <svg className="ml-auto h-[19px] w-[110px]" viewBox="1170 0 110 19" fill="none" stroke="#ddd" strokeWidth="1">
        <path d="M1177 9.500h8" />
        <path d="M1215.500 7.500h6v5.500h-6zM1217.500 7.500v-2h6v5.500h-2" />
        <path d="M1255 5.500l7.500 7.500M1262.500 5.500l-7.500 7.500" stroke="#fff" />
      </svg>
    </header>
  );
}

function Toolbar() {
  return (
    <div className="flex h-[19px] items-center border-b border-[#e3e4e8] bg-gradient-to-b from-[#e6e7ec] to-[#f0f1f4] pl-[5px] text-[9.300px] leading-none text-[#222]">
      <span className="w-[84px] whitespace-nowrap pt-[3px] tracking-[-0.330px] text-[#666]">http://127.0.0.1:7305</span>
      <span className="ml-[5px] h-[13px] w-px bg-[#c4c5ca]" />
      <svg className="ml-[7px] mt-[2px] h-[11px] w-[13px]" viewBox="0 0 13 11" fill="none">
        <rect x="3.500" y=".7" width="9" height="8" rx="1" fill="#f3f9fd" stroke="#b6c3d2" />
        <path d="M3.500 1.500h9v1.500h-9z" fill="#b9d5ea" />
        <path d="M.8 9.500c1-3 3-4 5-4v-1.500l3 2.500-3 2.500V7.500c-2 0-3 .5-5 2z" fill="#e8eef4" stroke="#8fa0b3" strokeWidth=".6" />
      </svg>
      <span className="ml-[3px] w-[68px] whitespace-nowrap pt-[4px] tracking-[-0.300px]">Open in Browser</span>
      <span className="ml-[7px] h-[13px] w-px bg-[#c4c5ca]" />
      <svg className="ml-[5px] h-[13px] w-[13px]" viewBox="0 0 13 13" fill="none" stroke="#b4c4d6">
        <circle cx="6.500" cy="6.500" r="5.800" stroke="#c6d0dc" strokeWidth=".9" />
        <path d="M9 4.500A3.300 3.300 0 1 0 9.600 7.500M9.500 2.500v2.500H7" strokeWidth="1.100" />
      </svg>
      <svg className="ml-auto mt-[2px] h-[12px] w-[14px]" viewBox="0 0 14 12" fill="none" stroke="#1c9bd8" strokeWidth="1.700">
        <path d="M.3 4.500h2C3.500 1.500 7.500.8 10 2.800M13.700 7.500h-2C10.500 10.700 6.500 11.300 4 9.200" />
        <circle cx="7" cy="6" r="2" fill="#1c9bd8" stroke="none" />
      </svg>
      <span className="ml-[3px] w-[30px] pt-[4px] tracking-[-0.200px]">Publish</span>
      <svg className="ml-[8px] mr-[6px] mt-[2px] h-[3px] w-[5px]" viewBox="0 0 6 4"><path d="M0 0h6L3 4z" fill="#222" /></svg>
    </div>
  );
}

const A = ({ children }) => <a className="text-[#6b2c91] underline decoration-1">{children}</a>;

function Field({ label, children, className }) {
  return (
    <div className={className}>
      <div className="flex h-[20px] items-center font-bold">{label}</div>
      {children}
    </div>
  );
}

function DownloadButton({ children, className }) {
  return (
    <div className={"flex h-[28.500px] items-center rounded-[3px] border border-[#ccc] bg-white pl-[10px] tracking-[-0.180px] underline " + className}>
      <FaDownload className="mr-[2.500px] h-[12px] w-[12px]" />
      {children}
    </div>
  );
}

function Sidebar() {
  return (
    <aside className="h-[446px] w-[401px] shrink-0 rounded-[3px] border border-[#e3e3e3] bg-[#f5f5f5] px-[15.500px] pt-[13.500px] shadow-[inset_0_1px_1px_rgba(0,0,0,0.05)]">
      <Field label="Upload CSV File" className="h-[82.500px]">
        <div className="mt-[3px] flex h-[28px] overflow-hidden rounded-[3px] border border-[#ccc]">
          <div className="flex w-[69px] items-center border-r border-[#ccc] bg-white pb-[1px] pl-[9.500px]">Browse...</div>
          <div className="flex flex-1 items-center bg-[#eee] pb-[1px] pl-[10px] text-[#777] shadow-[inset_0_1px_1px_rgba(0,0,0,0.075)]">No file selected</div>
        </div>
      </Field>
      <Field label="Select Metric:" className="h-[61.500px]">
        <div className="mt-[3px] flex h-[28.500px] items-center justify-between rounded-[3px] border border-[#ccc] bg-white pb-[1px] pl-[9.500px] pr-[14px]">
          <span>Downloads</span>
          <svg className="mt-[1px] h-[5px] w-[8px]" viewBox="0 0 8 5"><path d="M0 0h8L4 4.500z" fill="#333" /></svg>
        </div>
      </Field>
      <Field label="Start Date:" className="h-[62px]">
        <div className="mt-[3px] flex h-[28px] items-center rounded-[3px] border border-[#ccc] bg-white pb-[2px] pl-[9.500px] text-[#555]">2024-02-26</div>
      </Field>
      <Field label="End Date:" className="h-[63.500px]">
        <div className="mt-[2.500px] flex h-[28.500px] items-center rounded-[3px] border border-[#ccc] bg-white pb-[1px] pl-[9.500px] text-[#555]">2024-07-19</div>
      </Field>
      <DownloadButton className="w-[157px]">Download data as CSV</DownloadButton>
      <DownloadButton className="mt-[7.500px] w-[164px]">Download map as JPEG</DownloadButton>
      <div className="mt-[6.500px] whitespace-nowrap text-[8.700px] leading-[12px] tracking-[-0.165px]">
        <p className="mb-[9px]">The sample data is from the <A>Open Research Week 2024</A> recordings.</p>
        <p className="mb-[8px]">The code for this app can be found at <A>GitHub</A>.</p>
        <p>To cite this item: Skelly, Lara (2024). Map my repository: a R/Shiny app. Loughborough University.<br />Software. <A>https://doi.org/10.17028/rd.lboro.26335771</A></p>
      </div>
    </aside>
  );
}

function Taskbar() {
  return (
    <footer className="flex h-[34px] shrink-0 items-stretch border-t border-[#aab0b5] bg-gradient-to-r from-[#20383f] via-[#1f3441] to-[#1a2744] text-white">
      <div className="flex w-[40px] items-center justify-center">
        <svg className="h-[14px] w-[14px]" viewBox="0 0 14 14" fill="#fff"><path d="M0 2l6.300-.9v5.500H0zM7 1l7-1v6.600H7zM0 7.300h6.300v5.500L0 12zM7 7.300h7V14l-7-1z" /></svg>
      </div>
      <div className="flex w-[240px] items-center border border-[#cfd2d4] bg-[#f1f1f1] pl-[9px] text-[#333]">
        <svg className="h-[15px] w-[15px]" viewBox="0 0 15 15" fill="none" stroke="#222" strokeWidth="1.200"><circle cx="9" cy="5.500" r="4.500" /><path d="M5.700 8.700L.6 13.800" /></svg>
        <span className="ml-[8px] w-[144px] whitespace-nowrap pt-[1px] text-[12.600px] tracking-[-0.320px]">Type here to search</span>
        <div className="flex h-[27px] w-[60px] items-center rounded-[5px] bg-[#36046b] pl-[5px] text-white">
          <svg className="h-[13px] w-[10px]" viewBox="0 0 10 13" fill="#fff"><path d="M0 0h4.300v4.500H0zM5.500 0H10v4.500H5.500zM0 5.800h4.300V12C2 11 0 9 0 5.800zM5.500 5.800H10C10 9 8 11.300 5.500 12.500z" /><path d="M1.500 1.500h1.300v1.300H1.500zM7 2h1.500v1H7zM2 7.500h1.200v1.200H2zM7 7.200h1.300v1.300H7z" fill="#36046b" /></svg>
          <span className="ml-[2px] text-[6px] font-semibold leading-[6.200px] tracking-[-0.420px]">Loughborough<br />University</span>
        </div>
      </div>
      <div className="flex w-[40px] items-center justify-center">
        <svg className="h-[14px] w-[15px]" viewBox="0 0 15 14" fill="none" stroke="#e8ecee"><path d="M.5 0v2.500h9V0M.5 14v-2.500h9V14M.5 4.500h9v5h-9zM12.500 0v14" strokeWidth="1" /><path d="M11 5h3v2h-3z" fill="#e8ecee" stroke="none" /></svg>
      </div>
      <div className="flex w-[44px] items-center justify-center">
        <svg className="h-[22px] w-[22px]" viewBox="0 0 22 22">
          <defs><linearGradient id="edge" x1="0" y1="0" x2="1" y2=".5"><stop offset="0" stopColor="#1ca0e8" /><stop offset=".5" stopColor="#35c1e0" /><stop offset="1" stopColor="#5fd85a" /></linearGradient></defs>
          <path d="M1 10.500C1 5 5.500.8 11 .8c6 0 10.300 4 10.300 8.500 0 3-2.500 5-5.500 5-2 0-3.500-.7-3-2 1.200-2-.5-4-2.500-4C6 8.300 2.500 9.500 1 12.500z" fill="url(#edge)" />
          <path d="M1 11c1.500-2 4.500-4 7.500-3C6 11 7 15.500 11 17.300c3 1.300 6 .6 8.500-1-3 4.500-8 4.700-10.500 4C4 19.500 1 16 1 11z" fill="#1368b8" />
          <rect x="0" y="13.500" width="11" height="7.500" rx="1" fill="#b9630f" /><path d="M3.500 13.500V12h4v1.500" stroke="#7d3f05" fill="none" /><path d="M0 16.500h11" stroke="#7d3f05" strokeWidth=".8" /><path d="M4.500 16h2v2h-2z" fill="#f4b860" />
        </svg>
      </div>
      <div className="flex w-[41px] items-center justify-center">
        <svg className="h-[18px] w-[19px]" viewBox="0 0 19 18"><path d="M0 1h7l1.500 1.500H18.500V15H0z" fill="#e8a924" /><path d="M0 3.500h19V16H0z" fill="#fcd978" /><path d="M3.500 16.500V11q0-2 2-2h8q2 0 2 2v5.500h-3.200V12.500H6.700v4z" fill="#3f9bdf" /></svg>
      </div>
      <div className="flex w-[38px] items-center justify-center shadow-[inset_0_-2px_0_#76b9ed]">
        <svg className="h-[18px] w-[20px]" viewBox="0 0 20 18"><path d="M5 0h14v9H5z" fill="#1b7fd3" /><path d="M12 0h7v4.500h-7z" fill="#35a9e8" /><path d="M5 4.500h7V9H5z" fill="#0f5fa8" /><path d="M5 8l7.500 5L20 8v10H5z" fill="#2699e2" /><path d="M20 8v10L9 11z" fill="#53c3f3" /><rect y="4" width="10" height="10" rx="1" fill="#0f6cbd" /><circle cx="5" cy="9" r="2.400" fill="none" stroke="#fff" strokeWidth="1.400" /></svg>
      </div>
      <div className="ml-[7px] mr-[3px] flex w-[34px] items-center justify-center shadow-[inset_0_-2px_0_#76b9ed]">
        <svg className="-ml-[2px] h-[20px] w-[20px]" viewBox="0 0 20 20"><circle cx="10" cy="10" r="10" fill="#fbc116" /><path d="M10 5h8.660A10 10 0 0 0 1.340 5L5.700 12.500z" fill="#e33b2e" /><path d="M1.340 5A10 10 0 0 0 10 20l4.300-7.500-4.300 2.500-4.330-2.500z" fill="#2ba24c" /><circle cx="10" cy="10" r="5" fill="#fff" /><circle cx="10" cy="10" r="3.900" fill="#3b7fe8" /></svg>
      </div>
      <div className="flex w-[38px] items-center justify-center bg-[#4d5f69] pl-[3px] shadow-[inset_0_-2px_0_#76b9ed]"><RLogo size={20} /></div>
      <div className="mr-[4px] w-[3px] bg-[#3c4d58] shadow-[inset_0_-2px_0_#76b9ed]" />
      <div className="flex w-[35px] items-center justify-center pl-[2px] shadow-[inset_0_-2px_0_#76b9ed]">
        <svg className="h-[20px] w-[21px]" viewBox="0 0 21 20"><circle cx="11" cy="2.800" r="2.500" fill="#7b83eb" /><circle cx="16.500" cy="3.300" r="1.800" fill="#5b62c7" /><path d="M7 6h12v7q-1 5-6 5-5 0-6-4z" fill="#6a70d6" /><path d="M5 12h5v7q-4-1-5-4z" fill="#35d0d8" /><rect y="4.500" width="9.500" height="9.500" rx="1" fill="#4b53bc" /><path d="M2.300 7h5M4.800 7v5" stroke="#fff" strokeWidth="1.300" /><circle cx="14" cy="13" r="6.700" fill="#fff" /><circle cx="14" cy="13" r="5.400" fill="#fff" stroke="#2a9b34" strokeWidth="1.400" /><path d="M11.300 13.200l2 2 3.500-4" stroke="#2a9b34" strokeWidth="1.500" fill="none" /></svg>
      </div>
      <div className="ml-auto flex items-center">
        <svg className="h-[15px] w-[20px]" viewBox="0 0 20 15" fill="none" stroke="#fff" strokeWidth="1.200"><path d="M.7 1h16v12.500H2Q.7 13.500.7 12zM16.700 3.500h2.500V12q0 1.500-1.500 1.500h-1" /><path d="M3 4h11.500M9.500 7h5M9.500 10h5M3.500 6.800h3.500v3.500H3.500z" /></svg>
        <svg className="ml-[21px] h-[7px] w-[11px]" viewBox="0 0 11 7" fill="none" stroke="#fff"><path d="M.5 6.300l5-5 5 5" strokeWidth="1.200" /></svg>
        <svg className="ml-[8px] h-[9px] w-[14px]" viewBox="0 0 14 9"><path d="M3 9a2.800 2.800 0 0 1-.5-5.500A4.200 4.200 0 0 1 10 2.500 3.300 3.300 0 0 1 11.500 9z" fill="#1684dc" /><path d="M1 8.200L9 4l4.700 3.500Q13 9 11.500 9H3z" fill="#34a5f1" /></svg>
        <svg className="ml-[6px] h-[10px] w-[14px]" viewBox="0 0 14 10" fill="none" stroke="#fff"><path d="M4.500 3h8v5.500h-8zM13.500 4.500v2.500" /><path d="M5.500 4h6v3.500h-6z" fill="#fff" /><path d="M0 1.500h4M1 0v3.500h2V0M2 3.500v3h2" strokeWidth=".9" /></svg>
        <svg className="ml-[8px] h-[11px] w-[11px]" viewBox="0 0 11 11" fill="none" stroke="#b8c0cc"><path d="M.5 10.500A10 10 0 0 1 10.500.8M3.500 10.500a7 7 0 0 1 7-6.500M6.300 10.500a4.200 4.200 0 0 1 4.200-3.700" strokeWidth=".9" /><circle cx="9.700" cy="9.700" r="1.200" fill="#fff" stroke="none" /></svg>
        <svg className="ml-[6px] h-[12px] w-[14px]" viewBox="0 0 14 12" fill="none" stroke="#fff"><path d="M.5 4v4h2.300L6 11V1L2.800 4z" /><path d="M8 4q1.300 2 0 4" /><path d="M10 2.500q2.500 3.500 0 7M12 1q3 5 0 10" stroke="#8290a3" strokeWidth=".8" /></svg>
        <div className="ml-[7px] w-[54px] text-center text-[10.200px] leading-[15px] tracking-[-0.480px]">13:54<br />19/07/2024</div>
        <div className="relative ml-[14px] mr-[7px] h-[24px] w-[24px]">
          <svg className="-ml-[2px] h-[24px] w-[24px]" viewBox="0 0 24 24"><path d="M1 4h13v11H5.500L3.500 17v-2H1z" fill="#fff" /><path d="M3 7h9M3 9.500h9M3 12h6" stroke="#26334b" strokeWidth=".9" /><circle cx="14.500" cy="16.500" r="7" fill="#3e4757" stroke="#8a94a3" strokeWidth=".6" /></svg>
          <span className="absolute left-[6px] top-[10px] w-[13px] text-center text-[9.500px] font-semibold leading-[13px]">12</span>
        </div>
        <span className="mr-[2px] h-full w-px bg-[#5a6579]" />
      </div>
    </footer>
  );
}

export default function App() {
  return (
    <div className="flex h-[720px] w-[1280px] flex-col overflow-hidden bg-white font-['Open_Sans','Noto_Sans',sans-serif]">
      <TitleBar />
      <Toolbar />
      <main className="flex-1 overflow-hidden pl-[12.500px] font-['Liberation_Sans',Arial,sans-serif] text-[12px] leading-[16px] tracking-[-0.144px] text-[#333]">
        <h1 className="mt-[16px] text-[25.300px] leading-[30px] text-[#6b2c91]">Map your repository</h1>
        <p className="mt-[7px] whitespace-nowrap">This app maps the downloads and views of a set of item from the <A>Loughborough Research Repository</A>.</p>
        <p className="mt-[9px] whitespace-nowrap">Upload your file, make sure it is a CSV with a single column of item IDs, with a header. If you aren't sure of the file structure, download the current file and replace the item IDs with the set you are interested in. Next, select your parameters.</p>
        <p className="mt-[9px] italic text-[#222]">Our servers are slow - please be patient :)</p>
        <div className="mt-[9px] flex">
          <Sidebar />
          <section className="ml-[86.500px]">
            <h2 className="ml-[11.500px] h-[24px] text-[14.500px] font-bold leading-[21px] tracking-[0.300px] text-[#6b2c91]">Mapped downloads</h2>
            <WorldMap />
          </section>
        </div>
      </main>
      <Taskbar />
    </div>
  );
}
